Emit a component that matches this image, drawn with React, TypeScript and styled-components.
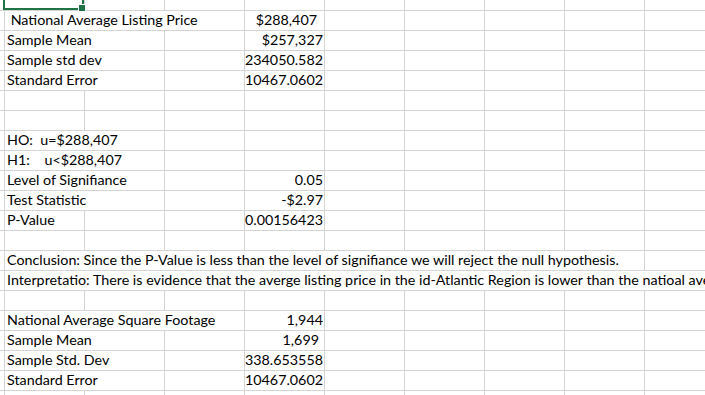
import * as React from 'react';
import styled, { createGlobalStyle } from 'styled-components';

const GRID = '#d4d4d4';
const COL_W = 80;
const COLS = 9;
const VALUE_COL = 3; // column D

type RowData = {
  label?: string;
  span?: number;
  value?: string;
  trail?: number;
};

const rows: RowData[] = [
  { label: ' National Average Listing Price', span: 3, value: '$288,407', trail: 6 },
  { label: 'Sample Mean', span: 2, value: '$257,327' },
  { label: 'Sample std dev', span: 2, value: '234050.582' },
  { label: 'Standard Error', span: 2, value: '10467.0602' },
  {},
  {},
  { label: 'HO:  u=$288,407', span: 2 },
  { label: 'H1:    u<$288,407', span: 2 },
  { label: 'Level of Signifiance', span: 2, value: '0.05' },
  { label: 'Test Statistic', span: 2, value: '-$2.97' },
  { label: 'P-Value', span: 1, value: '0.00156423' },
  {},
  { label: 'Conclusion: Since the P-Value is less than the level of signifiance we will reject the null hypothesis.', span: 8 },
  { label: 'Interpretatio: There is evidence that the averge listing price in the id-Atlantic Region is lower than the natioal average listing price.', span: 9 },
  {},
  { label: 'National Average Square Footage', span: 3, value: '1,944' },
  { label: 'Sample Mean', span: 2, value: '1,699', trail: 4 },
  { label: 'Sample Std. Dev', span: 2, value: '338.653558' },
  { label: 'Standard Error', span: 2, value: '10467.0602' },
  {},
  {},
];

function SheetRow({ row }: { row: RowData }) {
  const cells: React.ReactNode[] = [];
  let col = 0;
  if (row.label) {
    cells.push(
      <SheetCell key="label" $span={row.span ?? 1}>
        {row.label}
      </SheetCell>
    );
    col += row.span ?? 1;
  }
  while (col < COLS) {
    if (col === VALUE_COL && row.value) {
      cells.push(
        <SheetCell key={col} $span={1} $right $trail={row.trail ?? 0}>
          {row.value}
        </SheetCell>
      );
    } else {
      cells.push(<SheetCell key={col} $span={1} />);
    }
    col += 1;
  }
  return (
    <Row $h={20}>
      <Gutter />
      {cells}
    </Row>
  );
}

export default function App() {
  return (
    <>
      <Global />
      <Sheet>
        <Selection>
          <Handle />
        </Selection>
        <Row $h={11}>
          <Gutter />
          {Array.from({ length: COLS }, (_, i) => (
            <SheetCell key={i} $span={1} />
          ))}
        </Row>
        {rows.map((r, i) => (
          <SheetRow key={i} row={r} />
        ))}
      </Sheet>
    </>
  );
}

const Global = createGlobalStyle`
  html, body {
    margin: 0;
    padding: 0;
    background: #ffffff;
    overflow: hidden;
  }
  body {
    width: 705px;
    height: 395px;
  }
`;

const Sheet = styled.div`
  position: relative;
  width: 705px;
  height: 395px;
  overflow: hidden;
  background: #ffffff;
  font-family: Lato, 'Liberation Sans', sans-serif;
  font-size: 14.3px;
  color: #000000;
`;

const Row = styled.div<{ $h: number }>`
  display: grid;
  grid-template-columns: 5px repeat(${COLS}, ${COL_W}px);
  height: ${p => p.$h}px;
`;

const Gutter = styled.div`
  border-right: 1px solid ${GRID};
  border-bottom: 1px solid ${GRID};
`;

const SheetCell = styled.div<{ $span: number; $right?: boolean; $trail?: number }>`
  grid-column: span ${p => p.$span};
  box-sizing: border-box;
  border-right: 1px solid ${GRID};
  border-bottom: 1px solid ${GRID};
  display: flex;
  align-items: flex-end;
  justify-content: ${p => (p.$right ? 'flex-end' : 'flex-start')};
  padding: 0 ${p => 1 + (p.$trail ?? 0)}px 2px 2px;
  white-space: pre;
  line-height: 17px;
  min-width: 0;
`;

const Selection = styled.div`
  position: absolute;
  left: 3px;
  top: -20px;
  width: 81px;
  height: 30px;
  box-sizing: border-box;
  border: 2px solid #217346;
  z-index: 2;
`;

const Handle = styled.div`
  position: absolute;
  right: -4px;
  bottom: -4px;
  width: 6px;
  height: 6px;
  background: #217346;
  border: 1px solid #ffffff;
  box-sizing: content-box;
`;
